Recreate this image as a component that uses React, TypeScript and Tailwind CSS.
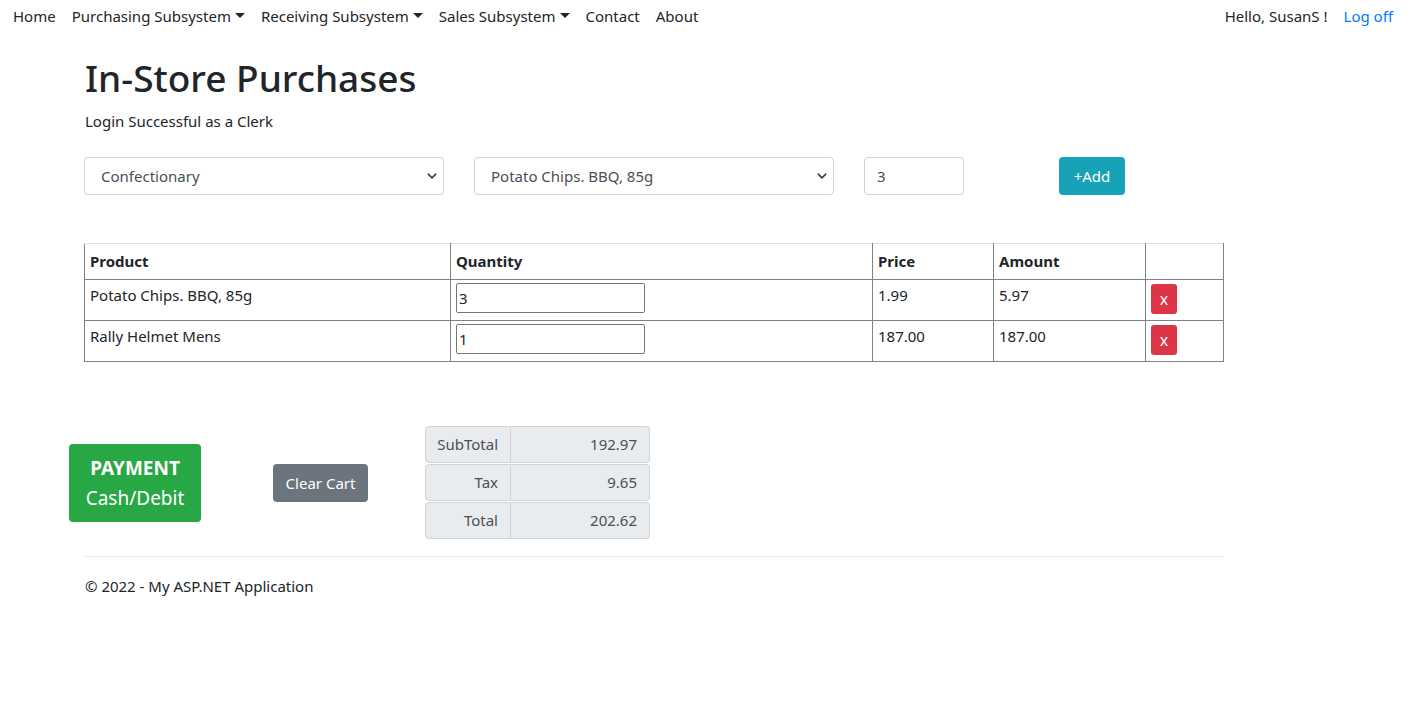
import React, { useState } from 'react';

type Line = { product: string; qty: string; price: string; amount: string };

const navItems = [
    { label: 'Home' },
    { label: 'Purchasing Subsystem', caret: true },
    { label: 'Receiving Subsystem', caret: true },
    { label: 'Sales Subsystem', caret: true },
    { label: 'Contact' },
    { label: 'About' },
];

const Caret = () => (
    <span className="ml-[4px] inline-block align-middle border-x-[5px] border-t-[5px] border-x-transparent border-t-[#212529] mb-[3px]" />
);

const SelectChevron = () => (
    <svg className="absolute right-[6px] top-1/2 -translate-y-1/2" width="10" height="10" viewBox="0 0 16 16">
        <path d="M2 5l6 6 6-6" fill="none" stroke="#343a40" strokeWidth="2.4" strokeLinecap="round" strokeLinejoin="round" />
    </svg>
);

const App: React.FC = () => {
    const [lines] = useState<Line[]>([
        { product: 'Potato Chips. BBQ, 85g', qty: '3', price: '1.99', amount: '5.97' },
        { product: 'Rally Helmet Mens', qty: '1', price: '187.00', amount: '187.00' },
    ]);

    const totals = [
        { label: 'SubTotal', value: '192.97' },
        { label: 'Tax', value: '9.65' },
        { label: 'Total', value: '202.62' },
    ];

    return (
        <div className="min-h-screen bg-white text-[15px] text-[#212529]" style={{ fontFamily: '"Noto Sans", sans-serif' }}>
            {/* Navbar */}
            <div className="flex items-center justify-between h-[31px] pl-[5px] pr-[25px] mb-[1px]">
                <div className="flex items-center">
                    {navItems.map(item => (
                        <span key={item.label} className="px-[8px] leading-[24px] whitespace-nowrap">
                            {item.label}
                            {item.caret && <Caret />}
                        </span>
                    ))}
                </div>
                <div className="flex items-center">
                    <span className="px-[8px] leading-[24px]">Hello, SusanS !</span>
                    <span className="px-[8px] leading-[24px] text-[#007bff]">Log off</span>
                </div>
            </div>

            {/* Main */}
            <div className="pl-[85px]">
                <div className="w-[1139px]">
                    <h1 className="text-[37px] font-medium leading-[48px] mt-[23px]">In-Store Purchases</h1>
                    <p className="leading-[24px] mt-[7px]">Login Successful as a Clerk</p>

                    <div className="flex items-center mt-[24px] -ml-[1px]">
                        <div className="relative w-[360px] h-[38px] border border-[#ced4da] rounded-[4px] flex items-center pl-[16px] text-[#495057]">
                            Confectionary
                            <SelectChevron />
                        </div>
                        <div className="relative w-[360px] h-[38px] border border-[#ced4da] rounded-[4px] flex items-center pl-[16px] text-[#495057] ml-[30px]">
                            Potato Chips. BBQ, 85g
                            <SelectChevron />
                        </div>
                        <div className="w-[100px] h-[38px] border border-[#ced4da] rounded-[4px] flex items-center pl-[12px] text-[#495057] ml-[30px]">
                            3
                        </div>
                        <button className="w-[66px] h-[38px] bg-[#17a2b8] text-white rounded-[4px] ml-[95px]">+Add</button>
                    </div>

                    {/* Cart table */}
                    <table className="mt-[48px] -ml-[1px] w-[1140px] border-collapse">
                        <thead>
                            <tr className="h-[36px]">
                                <th className="w-[366px] border border-[#808080] border-t-[#dee2e6] text-left font-bold px-[5px]">Product</th>
                                <th className="w-[422px] border border-[#808080] border-t-[#dee2e6] text-left font-bold px-[5px]">Quantity</th>
                                <th className="w-[121px] border border-[#808080] border-t-[#dee2e6] text-left font-bold px-[5px]">Price</th>
                                <th className="w-[152px] border border-[#808080] border-t-[#dee2e6] text-left font-bold px-[5px]">Amount</th>
                                <th className="border border-[#808080] border-t-[#dee2e6]" />
                            </tr>
                        </thead>
                        <tbody>
                            {lines.map(l => (
                                <tr key={l.product} className="h-[41px]">
                                    <td className="border border-[#808080] px-[5px] align-top pt-[3px] leading-[24px]">{l.product}</td>
                                    <td className="border border-[#808080] px-[5px] align-top pt-[3px]">
                                        <div className="w-[189px] h-[30px] border border-[#767676] rounded-[2px] flex items-center pl-[2px] leading-none">{l.qty}</div>
                                    </td>
                                    <td className="border border-[#808080] px-[5px] align-top pt-[3px] leading-[24px]">{l.price}</td>
                                    <td className="border border-[#808080] px-[5px] align-top pt-[3px] leading-[24px]">{l.amount}</td>
                                    <td className="border border-[#808080] px-[5px] align-top pt-[4px]">
                                        <button className="w-[26px] h-[30px] bg-[#dc3545] text-white rounded-[3px] leading-none text-[16px]">x</button>
                                    </td>
                                </tr>
                            ))}
                        </tbody>
                    </table>

                    {/* Payment + totals */}
                    <div className="flex items-start mt-[64px] -ml-[16px]">
                        <button className="mt-[18px] w-[132px] h-[78px] bg-[#28a745] text-white rounded-[4px] text-[19px] leading-[30px] flex flex-col items-center justify-center">
                            <span className="font-bold">PAYMENT</span>
                            <span>Cash/Debit</span>
                        </button>
                        <button className="mt-[38px] ml-[72px] w-[95px] h-[38px] bg-[#6c757d] text-white rounded-[4px]">Clear Cart</button>
                        <div className="ml-[57px] flex flex-col gap-[1px] text-[#495057]">
                            {totals.map(t => (
                                <div key={t.label} className="flex h-[37px]">
                                    <div className="w-[86px] bg-[#e9ecef] border border-[#ced4da] rounded-l-[4px] flex items-center justify-end pr-[12px]">{t.label}</div>
                                    <div className="w-[139px] bg-[#e9ecef] border border-l-0 border-[#ced4da] rounded-r-[4px] flex items-center justify-end pr-[12px]">{t.value}</div>
                                </div>
                            ))}
                        </div>
                    </div>

                    <hr className="mt-[17px] border-t border-[#e5e5e5]" />
                    <p className="mt-[17px] leading-[24px]">© 2022 - My ASP.NET Application</p>
                </div>
            </div>
        </div>
    );
};

export default App;
